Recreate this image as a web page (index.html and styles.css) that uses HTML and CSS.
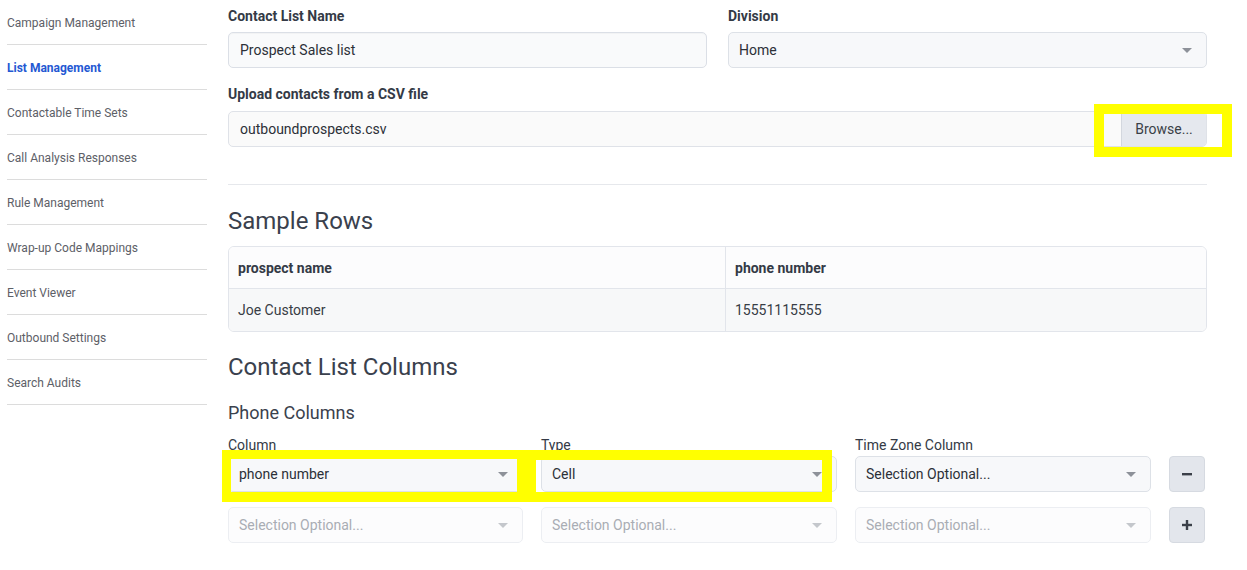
FILE: index.html
```html
<!DOCTYPE html>
<html lang="en">
<head>
<meta charset="utf-8">
<title>List Management</title>
<link rel="stylesheet" href="styles.css">
</head>
<body>
<div class="page">
  <nav class="sidebar">
    <ul class="nav-list">
      <li class="nav-item">Campaign Management</li>
      <li class="nav-item active">List Management</li>
      <li class="nav-item">Contactable Time Sets</li>
      <li class="nav-item">Call Analysis Responses</li>
      <li class="nav-item">Rule Management</li>
      <li class="nav-item">Wrap-up Code Mappings</li>
      <li class="nav-item">Event Viewer</li>
      <li class="nav-item">Outbound Settings</li>
      <li class="nav-item">Search Audits</li>
    </ul>
  </nav>

  <main class="main">
    <div class="row-two">
      <div class="field">
        <div class="field-label">Contact List Name</div>
        <div class="input">Prospect Sales list</div>
      </div>
      <div class="field">
        <div class="field-label">Division</div>
        <div class="select">
          <span class="select-value">Home</span>
          <span class="caret"></span>
        </div>
      </div>
    </div>

    <div class="field upload">
      <div class="field-label upload-label">Upload contacts from a CSV file</div>
      <div class="file-input">
        <span class="file-name">outboundprospects.csv</span>
        <span class="file-btn">Browse...</span>
      </div>
    </div>

    <hr class="divider">

    <h2 class="section-title">Sample Rows</h2>
    <table class="sample-table">
      <thead>
        <tr><th class="col-a">prospect name</th><th class="col-b">phone number</th></tr>
      </thead>
      <tbody>
        <tr><td class="col-a">Joe Customer</td><td class="col-b">15551115555</td></tr>
      </tbody>
    </table>

    <h2 class="section-title columns-title">Contact List Columns</h2>
    <h3 class="sub-title">Phone Columns</h3>

    <div class="phone-grid">
      <div class="grid-label">Column</div>
      <div class="grid-label">Type</div>
      <div class="grid-label">Time Zone Column</div>
      <div></div>

      <div class="select">
        <span class="select-value">phone number</span>
        <span class="caret"></span>
      </div>
      <div class="select">
        <span class="select-value">Cell</span>
        <span class="caret"></span>
      </div>
      <div class="select">
        <span class="select-value">Selection Optional...</span>
        <span class="caret"></span>
      </div>
      <div class="icon-btn">
        <svg width="12" height="12" viewBox="0 0 12 12"><rect x="1" y="5" width="10" height="2.4" fill="#3b4049"/></svg>
      </div>

      <div class="select disabled">
        <span class="select-value">Selection Optional...</span>
        <span class="caret"></span>
      </div>
      <div class="select disabled">
        <span class="select-value">Selection Optional...</span>
        <span class="caret"></span>
      </div>
      <div class="select disabled">
        <span class="select-value">Selection Optional...</span>
        <span class="caret"></span>
      </div>
      <div class="icon-btn">
        <svg width="12" height="12" viewBox="0 0 12 12"><rect x="1" y="4.8" width="10" height="2.4" fill="#3b4049"/><rect x="4.8" y="1" width="2.4" height="10" fill="#3b4049"/></svg>
      </div>
    </div>
  </main>

  <div class="highlight hl-browse"></div>
  <div class="highlight hl-column"></div>
  <div class="highlight hl-type"></div>
</div>
</body>
</html>
```

FILE: styles.css
```css
* { box-sizing: border-box; }

html, body {
  margin: 0;
  padding: 0;
  background: #ffffff;
}

body {
  font-family: Roboto, "Liberation Sans", Arial, sans-serif;
  color: #343a46;
}

.page {
  position: relative;
  display: flex;
  gap: 21px;
  padding-left: 7px;
  width: 1247px;
}

/* Sidebar */
.sidebar {
  width: 200px;
  flex: none;
}

.nav-list {
  list-style: none;
  margin: 0;
  padding: 0;
}

.nav-item {
  height: 45px;
  display: flex;
  align-items: center;
  padding-top: 1px;
  border-bottom: 1px solid #dcdcdc;
  font-size: 12px;
  color: #5d6067;
}

.nav-item.active {
  color: #2458d3;
  font-weight: 700;
}

/* Main */
.main {
  width: 979px;
  flex: none;
  padding-top: 6px;
}

.row-two {
  display: grid;
  grid-template-columns: 1fr 1fr;
  gap: 21px;
  margin-bottom: 16px;
}

.field-label {
  font-size: 14px;
  line-height: 20px;
  font-weight: 700;
  color: #343a46;
  margin-bottom: 6px;
}

.upload-label {
  margin-bottom: 7px;
}

.input {
  height: 36px;
  display: flex;
  align-items: center;
  padding: 0 11px;
  background: #f9fafb;
  border: 1px solid #dbdfe6;
  border-radius: 5px;
  font-size: 14px;
  color: #2c3038;
  box-shadow: inset 0 1px 1px rgba(0,0,0,0.03);
}

.select {
  height: 36px;
  display: flex;
  align-items: center;
  justify-content: space-between;
  padding: 0 14px 0 10px;
  background: #f7f8fa;
  border: 1px solid #dde1e7;
  border-radius: 5px;
  font-size: 14px;
  color: #2c3038;
}

.caret {
  width: 0;
  height: 0;
  border-left: 5px solid transparent;
  border-right: 5px solid transparent;
  border-top: 5px solid #8d9199;
}

.select.disabled {
  background: #fcfcfd;
  border-color: #eceef2;
  color: #a9adb4;
}

.select.disabled .caret {
  border-top-color: #c4c7cc;
}

.file-input {
  height: 36px;
  display: flex;
  align-items: stretch;
  background: #fafafa;
  border: 1px solid #dfe2e8;
  border-radius: 5px;
  font-size: 14px;
  color: #2c3038;
  overflow: hidden;
}

.file-name {
  flex: 1;
  display: flex;
  align-items: center;
  padding-left: 11px;
}

.file-btn {
  width: 85px;
  display: flex;
  align-items: center;
  justify-content: center;
  background: #e5e8ee;
  border-left: 1px solid #d3d7de;
  color: #3a3f47;
}

.divider {
  margin: 37px 0 22px 0;
  border: 0;
  border-top: 1px solid #e6e8ec;
  height: 0;
}

.section-title {
  margin: 0;
  font-size: 24px;
  line-height: 28px;
  font-weight: 400;
  color: #3a414d;
}

.sample-table {
  width: 100%;
  margin-top: 11px;
  border-collapse: separate;
  border-spacing: 0;
  border: 1px solid #e2e5eb;
  border-radius: 6px;
  overflow: hidden;
  font-size: 14px;
}

.sample-table th,
.sample-table td {
  text-align: left;
  padding: 0 9px;
}

.sample-table th {
  height: 42px;
  background: #fcfcfd;
  font-weight: 700;
  color: #343a46;
  border-bottom: 1px solid #e2e5eb;
}

.sample-table td {
  height: 42px;
  background: #f7f8f9;
  color: #383d45;
}

.sample-table .col-a {
  width: 496px;
}

.sample-table .col-b {
  border-left: 1px solid #e2e5eb;
}

.columns-title {
  margin-top: 21px;
}

.sub-title {
  margin: 21px 0 0 0;
  font-size: 18px;
  line-height: 21px;
  font-weight: 400;
  color: #3a414d;
}

.phone-grid {
  margin-top: 14px;
  display: grid;
  grid-template-columns: 295px 296px 296px 36px;
  column-gap: 18px;
  row-gap: 15px;
}

.grid-label {
  font-size: 14px;
  line-height: 16px;
  color: #343a46;
  margin-bottom: -12px;
}

.icon-btn {
  width: 36px;
  height: 36px;
  display: flex;
  align-items: center;
  justify-content: center;
  background: #e3e6ec;
  border: 1px solid #d6dae1;
  border-radius: 4px;
}

/* Yellow annotation overlays */
.highlight {
  position: absolute;
  border: 10px solid #ffff00;
  pointer-events: none;
}

.hl-browse {
  left: 1094px;
  top: 104px;
  width: 138px;
  height: 53px;
}

.hl-column {
  left: 222px;
  top: 450px;
  width: 305px;
  height: 52px;
  border-width: 9px 10px 10px 9px;
}

.hl-type {
  left: 527px;
  top: 450px;
  width: 305px;
  height: 52px;
  border-width: 10px 10px 10px 9px;
}
```
